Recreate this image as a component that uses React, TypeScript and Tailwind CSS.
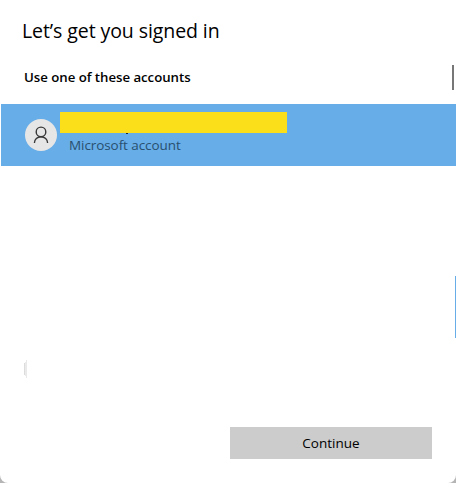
const font = "font-['Open_Sans','Noto_Sans',sans-serif]";

function PersonIcon() {
  return (
    <svg width="32" height="32" viewBox="0 0 32 32" fill="none" stroke="#383838" strokeWidth="1.4">
      <circle cx="16" cy="12.9" r="4.8" />
      <path d="M9.4 24v-.1a6.6 6.2 0 0 1 13.2 0v.1" />
    </svg>
  );
}

function AccountRow() {
  return (
    <button className="ml-px flex h-[62px] w-[455px] items-start bg-[#67ade8] pl-6 text-left">
      <span className="mt-[15px] size-8 shrink-0 overflow-hidden rounded-full bg-[#e6e6e6]">
        <PersonIcon />
      </span>
      <span className="ml-[3px] flex flex-col pt-2">
        <span className="flex h-[21px] w-[227px] bg-[#fbdf1b]" />
        <span className="ml-[66px] h-px w-0.5 bg-[#17283a]" />
        <span className="ml-[9px] mt-[3px] whitespace-nowrap text-[13.5px] leading-4 tracking-[-0.08px] text-[#29506f]">
          Microsoft account
        </span>
      </span>
    </button>
  );
}

export default function App() {
  return (
    <div className="h-[483px] w-[456px] overflow-hidden bg-[#b5b5b5]">
      <main className={`${font} flex h-full flex-col overflow-hidden rounded-b-lg bg-white text-black`}>
        <header className="h-[65px] pl-[22px] pt-[19px]">
          <h1 className="whitespace-nowrap text-[19.5px] leading-6 tracking-[-0.08px]">Let’s get you signed in</h1>
        </header>
        <div className="flex h-[39px] items-start justify-between pl-6 pr-0.5">
          <h2 className="whitespace-nowrap pt-1 text-[13.25px] font-semibold leading-4 tracking-[-0.04px]">
            Use one of these accounts
          </h2>
          <span className="h-[25px] w-0.5 bg-[#777777]" />
        </div>
        <AccountRow />
        <div className="flex h-[261px] justify-between pl-6">
          <span className="mt-[194px] flex h-[18px] items-center">
            <span className="h-3 w-px bg-[#dcdcdc]" />
            <span className="h-[14px] w-px bg-[#ebebeb]" />
            <span className="h-[18px] w-px bg-[#e9e9e9]" />
          </span>
          <span className="mt-[110px] h-[62px] w-px bg-[#67ade8]" />
        </div>
        <footer className="flex justify-end pr-6">
          <button className="h-8 w-[202px] bg-[#cccccc] text-[13.5px] leading-8">Continue</button>
        </footer>
      </main>
    </div>
  );
}
